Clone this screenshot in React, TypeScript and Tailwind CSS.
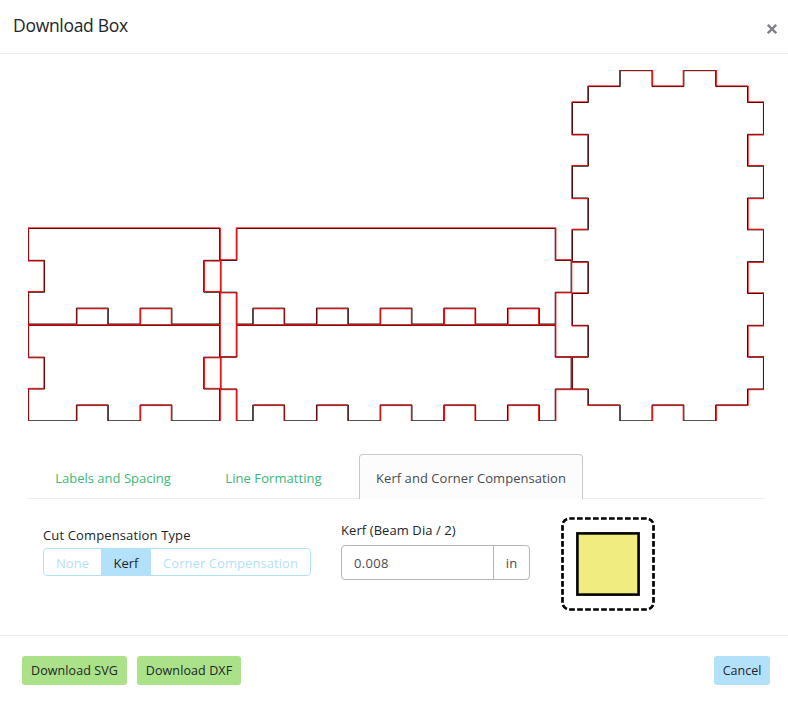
import React from "react";

type Pt = [number, number];

const U = 15.917;
const KERF = 0.65;

// Panel outlines in half-tab units, listed clockwise.
const sidePanel: Pt[] = [
  [0, 0], [12, 0], [12, 2], [11, 2], [11, 4], [12, 4], [12, 6],
  [9, 6], [9, 5], [7, 5], [7, 6], [5, 6], [5, 5], [3, 5], [3, 6],
  [0, 6], [0, 4], [1, 4], [1, 2], [0, 2],
];

const frontPanel: Pt[] = [
  [1, 0], [21, 0], [21, 2], [22, 2], [22, 4], [21, 4], [21, 6],
  [20, 6], [20, 5], [18, 5], [18, 6], [16, 6], [16, 5], [14, 5], [14, 6],
  [12, 6], [12, 5], [10, 5], [10, 6], [8, 6], [8, 5], [6, 5], [6, 6],
  [4, 6], [4, 5], [2, 5], [2, 6], [1, 6], [1, 4], [0, 4], [0, 2], [1, 2],
];

const basePanel: Pt[] = [
  [1, 1], [3, 1], [3, 0], [5, 0], [5, 1], [7, 1], [7, 0], [9, 0], [9, 1], [11, 1],
  [11, 2], [12, 2], [12, 4], [11, 4], [11, 6], [12, 6], [12, 8], [11, 8], [11, 10],
  [12, 10], [12, 12], [11, 12], [11, 14], [12, 14], [12, 16], [11, 16], [11, 18],
  [12, 18], [12, 20], [11, 20], [11, 21],
  [9, 21], [9, 22], [7, 22], [7, 21], [5, 21], [5, 22], [3, 22], [3, 21], [1, 21],
  [1, 20], [0, 20], [0, 18], [1, 18], [1, 16], [0, 16], [0, 14], [1, 14], [1, 12],
  [0, 12], [0, 10], [1, 10], [1, 8], [0, 8], [0, 6], [1, 6], [1, 4], [0, 4], [0, 2], [1, 2],
];

const panels: { shape: Pt[]; x: number; y: number }[] = [
  { shape: sidePanel, x: 0.65, y: 158.54 },
  { shape: sidePanel, x: 0.65, y: 255.34 },
  { shape: frontPanel, x: 192.97, y: 158.54 },
  { shape: frontPanel, x: 192.97, y: 255.34 },
  { shape: basePanel, x: 544.44, y: 0.67 },
];

// Moves every edge outwards by the given offset and returns the closed path.
function outline(shape: Pt[], ox: number, oy: number, offset: number) {
  const n = shape.length;
  const points = shape.map((p, i) => {
    const a = shape[(i + n - 1) % n];
    const b = shape[(i + 1) % n];
    const nx = Math.sign(p[1] - a[1]) + Math.sign(b[1] - p[1]);
    const ny = -Math.sign(p[0] - a[0]) - Math.sign(b[0] - p[0]);
    return `${(ox + p[0] * U + nx * offset).toFixed(3)},${(oy + p[1] * U + ny * offset).toFixed(3)}`;
  });
  return `M${points.join("L")}Z`;
}

function BoxPreview() {
  return (
    <svg className="block" width="736" height="351" viewBox="0 0 736 351" fill="none">
      {panels.map((p, i) => (
        <path key={`cut${i}`} d={outline(p.shape, p.x, p.y, 0)} stroke="#000" />
      ))}
      {panels.map((p, i) => (
        <path key={`kerf${i}`} d={outline(p.shape, p.x, p.y, KERF)} stroke="#f00" />
      ))}
    </svg>
  );
}

function KerfIcon() {
  return (
    <svg className="block" width="94" height="94" viewBox="0 0 94 94">
      <rect x="1.5" y="1.5" width="91" height="91" rx="7" fill="none" stroke="#000" strokeWidth="2.7" strokeDasharray="5.7 2.3" strokeDashoffset="0.5" />
      <rect x="16.4" y="16.4" width="61.2" height="61.2" fill="#f1ec80" stroke="#000" strokeWidth="2.6" />
    </svg>
  );
}

export default function App() {
  return (
    <div className="flex h-[702px] w-[788px] flex-col bg-white font-['Open_Sans',sans-serif] text-[13px] leading-5 text-[#212529]">
      <header className="flex h-[54px] shrink-0 justify-between border-b border-[#ebecee] pr-[10px] pl-[13px]">
        <h1 className="pt-[13px] text-[17.5px] leading-6 tracking-[-0.3px]">Download Box</h1>
        <button className="mt-[18px] flex h-[21px] w-[13px] items-center justify-center text-[#7f7f86]" aria-label="Close">
          <svg width="10" height="10" viewBox="0 0 10 10" stroke="currentColor" strokeWidth="2.3">
            <path d="M0.8 0.8L9.2 9.2M9.2 0.8L0.8 9.2" />
          </svg>
        </button>
      </header>

      <main className="flex h-[582px] shrink-0 flex-col border-b border-[#ebecee] px-7 pt-4">
        <BoxPreview />
        <nav className="mt-[33px] flex h-[45px] w-[736px] shrink-0 border-b border-[#ebecee] text-[#3cb878]">
          <button className="w-[170px] pt-1 whitespace-nowrap">Labels and Spacing</button>
          <button className="w-[151px] pt-1 tracking-[0.06px] whitespace-nowrap">Line Formatting</button>
          <div className="ml-[10px] -mb-px flex w-[224px] items-center justify-center rounded-t border border-b-0 border-[#c8c8ca] bg-[#fcfcfc] pt-[2px] tracking-[0.05px] whitespace-nowrap text-[#4a4a4f]">
            Kerf and Corner Compensation
          </div>
        </nav>
        <div className="flex items-start pl-[15px]">
          <div className="w-[298px] pt-[26px]">
            <div className="tracking-[0.13px]">Cut Compensation Type</div>
            <div className="mt-[3px] flex h-7 w-[268px] overflow-hidden rounded border border-[#b4e1fa] whitespace-nowrap text-[#b4e1fa]">
              <div className="flex w-[57px] items-center justify-center pt-px">None</div>
              <div className="flex w-[50px] items-center justify-center bg-[#b4e1fa] pt-px text-[#212529]">Kerf</div>
              <div className="flex flex-1 items-center justify-center pt-px tracking-[0.07px]">Corner Compensation</div>
            </div>
          </div>
          <div className="w-[220px] pt-[21px]">
            <div className="tracking-[0.08px]">Kerf (Beam Dia / 2)</div>
            <div className="mt-[5px] flex h-[35px] w-[189px] rounded border border-[#b4b4b6] text-[#4a4a4f]">
              <div className="flex flex-1 items-center border-r border-[#b4b4b6] pl-3 tracking-[0.3px]">0.008</div>
              <div className="flex w-[35px] items-center justify-center">in</div>
            </div>
          </div>
          <div className="pt-[18px]">
            <KerfIcon />
          </div>
        </div>
      </main>

      <footer className="flex items-start justify-between pt-5 pr-[18px] pl-[22px] text-[12.5px]">
        <div className="flex gap-[10px]">
          <button className="h-[29px] w-[105px] rounded-[3px] bg-[#abe188] pt-px tracking-[0.1px] whitespace-nowrap">Download SVG</button>
          <button className="h-[29px] w-[104px] rounded-[3px] bg-[#abe188] pt-px tracking-[0.1px] whitespace-nowrap">Download DXF</button>
        </div>
        <button className="h-[29px] w-14 rounded-[3px] bg-[#b4e1fa] pt-px">Cancel</button>
      </footer>
    </div>
  );
}
